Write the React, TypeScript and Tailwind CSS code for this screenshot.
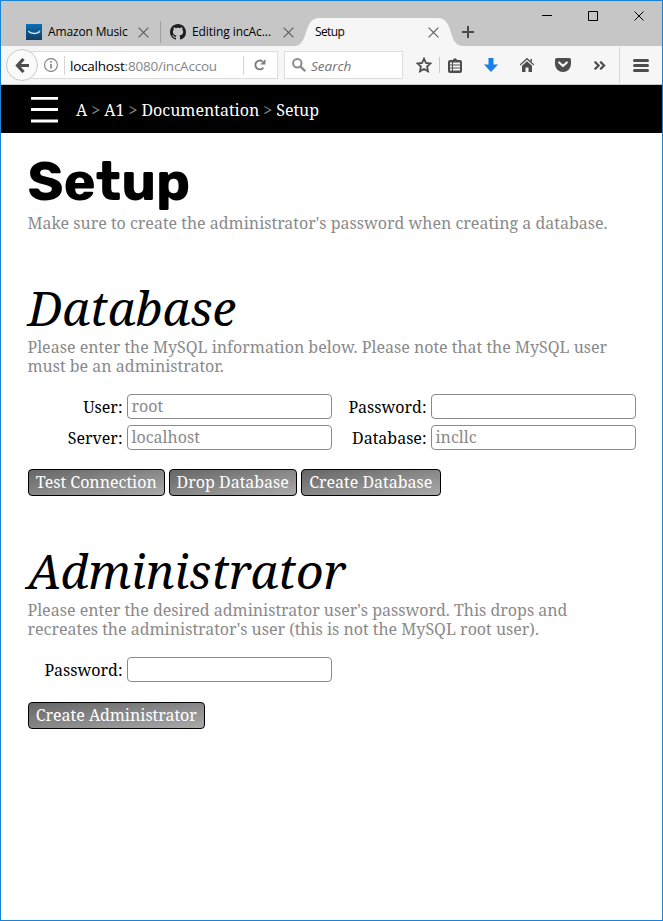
import type { ReactNode } from 'react';

const serif = "font-['Noto_Serif','Droid_Serif','DejaVu_Serif',serif]";
const sans = "font-['Segoe_UI','Open_Sans','Noto_Sans',sans-serif]";

function CloseIcon() {
  return (
    <svg className="h-[11px] w-[11px] shrink-0" viewBox="0 0 11 11" fill="none" stroke="#5c5c5c" strokeWidth="1.15">
      <path d="M.6.6l9.8 9.8M10.4.6L.6 10.4" />
    </svg>
  );
}

function TitleBar() {
  return (
    <div className={`flex h-[45px] bg-[#c6c6c6] text-[12px] text-black ${sans}`}>
      <div className="mt-[17px] flex h-[28px] w-[294px] shrink-0 items-center pl-[25px]">
        <svg className="h-4 w-4 shrink-0" viewBox="0 0 16 16">
          <defs>
            <linearGradient id="amz" x1="0" y1="0" x2="0" y2="1">
              <stop offset="0" stopColor="#0a6fb5" />
              <stop offset="1" stopColor="#123c63" />
            </linearGradient>
          </defs>
          <rect width="16" height="16" fill="url(#amz)" />
          <path d="M2.300 7.300c3 2.700 8 2.900 10.800.6" fill="none" stroke="#d9effc" strokeWidth="1.3" />
          <path d="M12 7.200l1.900-.1-.4 1.600" fill="none" stroke="#d9effc" strokeWidth=".8" />
        </svg>
        <span className="ml-[6px] w-[90px] whitespace-nowrap tracking-[-0.15px]">Amazon Music</span>
        <CloseIcon />
        <div className="ml-[11px] h-[22px] w-px bg-[#a0a0a0]" />
        <svg className="ml-[9px] h-4 w-4 shrink-0" viewBox="0 0 16 16" fill="#1b1f23">
          <path d="M8 0C3.58 0 0 3.58 0 8c0 3.54 2.29 6.53 5.47 7.59.4.07.55-.17.55-.38 0-.19-.01-.82-.01-1.49-2.01.37-2.53-.49-2.69-.94-.09-.23-.48-.94-.82-1.13-.28-.15-.68-.52-.01-.53.63-.01 1.08.58 1.23.82.72 1.21 1.87.87 2.33.66.07-.52.28-.87.51-1.07-1.78-.2-3.64-.89-3.64-3.95 0-.87.31-1.59.82-2.15-.08-.2-.36-1.02.08-2.12 0 0 .67-.21 2.2.82.64-.18 1.32-.27 2-.27s1.36.09 2 .27c1.53-1.04 2.2-.82 2.2-.82.44 1.1.16 1.92.08 2.12.51.56.82 1.27.82 2.15 0 3.07-1.87 3.75-3.65 3.95.29.25.54.73.54 1.48 0 1.07-.01 1.93-.01 2.2 0 .21.15.46.55.38A8.01 8.01 0 0016 8c0-4.42-3.58-8-8-8z" />
        </svg>
        <span className="ml-[6px] w-[91px] whitespace-nowrap tracking-[-0.08px]">Editing incAc...</span>
        <CloseIcon />
      </div>
      <div className="relative mt-[17px] h-[28px] w-[167px] shrink-0">
        <svg className="absolute inset-0 h-[28px] w-[167px]" viewBox="0 0 167 28">
          <path d="M0 28C14 27 8 0 24 0H143C159 0 153 27 167 28z" fill="#f6f6f6" />
        </svg>
        <div className="relative flex h-full items-center pl-5">
          <span className="w-[113px] tracking-[-0.6px]">Setup</span>
          <CloseIcon />
        </div>
      </div>
      <svg className="mt-[25px] h-[12px] w-[12px] shrink-0" viewBox="0 0 12 12" stroke="#4a4a4a" strokeWidth="2">
        <path d="M6 0v12M0 6h12" />
      </svg>
      <svg className="ml-[68px] mt-[10px] h-[11px] w-[102px] shrink-0" viewBox="0 0 102 11" fill="none" stroke="#000">
        <path d="M0 4.5h10M46.5.5h9v9h-9zM92.5.5l9 9M101.500.500l-9 9" />
      </svg>
    </div>
  );
}

function Toolbar() {
  return (
    <div className={`flex h-[39px] items-center border-b border-[#c8c8c6] bg-[#f6f6f6] ${sans}`}>
      <div className="z-10 ml-[5px] flex h-8 w-8 shrink-0 items-center justify-center rounded-full border border-[#c9c9c9] bg-[#fafafa]">
        <svg className="h-[15px] w-[15px]" viewBox="0 0 15 15" fill="none" stroke="#4d4d4d" strokeWidth="3.2">
          <path d="M8.500 1L2.500 7.500l6 6.500M2.500 7.500H14" />
        </svg>
      </div>
      <div className="-ml-4 flex h-[28px] w-[256px] shrink-0 items-center border border-[#dedede] bg-white pl-[21px]">
        <svg className="h-[14px] w-[14px] shrink-0" viewBox="0 0 14 14" fill="none" stroke="#808080">
          <circle cx="7" cy="7" r="6.4" strokeWidth="1.1" />
          <path d="M7 6v4.500M7 3v1.700" strokeWidth="1.6" />
        </svg>
        <div className="ml-[6px] h-[19px] w-px bg-[#d5d5d5]" />
        <span className="ml-[5px] mt-[3px] w-[173px] whitespace-nowrap text-[13.5px] tracking-[-0.22px] text-[#858585]"><span className="text-black">localhost</span>:8080/incAccou</span>
        <div className="h-[19px] w-px bg-[#d5d5d5]" />
        <svg className="ml-[10px] h-[12px] w-[12px] shrink-0" viewBox="0 0 12 12" fill="none" stroke="#808080" strokeWidth="1.9">
          <path d="M8.600 2.600A4.400 4.400 0 1 0 9.300 8.600" />
          <path d="M11.500 0v5.400H6.200z" fill="#808080" stroke="none" />
        </svg>
      </div>
      <div className="ml-[6px] flex h-[28px] w-[119px] shrink-0 items-center border border-[#dedede] bg-white pl-[7px]">
        <svg className="h-[14px] w-[14px]" viewBox="0 0 14 14" fill="none" stroke="#8b8b8b">
          <circle cx="5.3" cy="5.3" r="4.2" strokeWidth="2" />
          <path d="M8.500 8.500l4.700 4.700" strokeWidth="2.4" />
        </svg>
        <span className="ml-[5px] mt-[2px] text-[13.5px] italic text-[#737373]">Search</span>
      </div>
      <svg className="ml-[13px] h-4 w-4 shrink-0" viewBox="0 0 16 16" fill="none" stroke="#4d4d4d" strokeWidth="1.8">
        <path d="M8 1.700l1.900 4.300 4.600.500-3.400 3.100.9 4.700L8 12l-4 2.300.9-4.700L1.500 6.500l4.600-.5z" />
      </svg>
      <div className="ml-[7px] h-4 w-px shrink-0 bg-[#c8c8c8]" />
      <svg className="ml-[8px] h-[15px] w-[14px] shrink-0" viewBox="0 0 14 15">
        <path d="M2 2h2.500L7 0l2.500 2H12q2 0 2 2v9q0 2-2 2H2q-2 0-2-2V4q0-2 2-2z" fill="#4d4d4d" />
        <path d="M2 5.500h2M5 5.500h7M2 8.500h2M5 8.500h7M2 11.500h2M5 11.500h7" stroke="#f6f6f6" strokeWidth="2" />
      </svg>
      <svg className="ml-[22px] h-[14px] w-[14px] shrink-0" viewBox="0 0 14 14" fill="#177fe8">
        <path d="M4.500 0h5v6.500H14L7 14 0 6.500h4.500z" />
      </svg>
      <svg className="ml-[22px] h-[14px] w-[14px] shrink-0" viewBox="0 0 14 14" fill="#4d4d4d">
        <path d="M0 7l7-6.300L14 7" fill="none" stroke="#4d4d4d" strokeWidth="1.3" />
        <path d="M2 7.700l5-4.500 5 4.500V14H8.500v-4.500h-3V14H2zM10.500 1H12v3l-1.500-1.300z" />
      </svg>
      <svg className="ml-[21px] h-[14px] w-4 shrink-0" viewBox="0 0 16 14">
        <path d="M2 0h12q2 0 2 2v4a8 8 0 0 1-16 0V2q0-2 2-2z" fill="#4d4d4d" />
        <path d="M4.200 4.500L8 8l3.800-3.500" fill="none" stroke="#f6f6f6" strokeWidth="2.2" strokeLinecap="round" strokeLinejoin="round" />
      </svg>
      <svg className="ml-[23px] h-[9px] w-[12px] shrink-0" viewBox="0 0 12 9" fill="none" stroke="#4d4d4d" strokeWidth="2.2">
        <path d="M.7.600L4.600 4.500.7 8.400M6.200.600l3.900 3.900-3.900 3.900" />
      </svg>
      <div className="ml-[13px] h-[36px] w-px shrink-0 bg-[#d9d9d9]" />
      <svg className="ml-[13px] h-[13px] w-4 shrink-0" viewBox="0 0 16 13" stroke="#4d4d4d" strokeWidth="3" strokeLinecap="round">
        <path d="M1.500 1.500h13M1.500 6.500h13M1.500 11.500h13" />
      </svg>
    </div>
  );
}

function Crumbs() {
  const sep = <span className="text-[#8a8a8a]">&gt;</span>;
  return (
    <nav className="flex h-12 items-center bg-black pl-[29.5px] text-[16px] text-white">
      <svg className="mt-[2px] h-[26px] w-[27.500px] shrink-0" viewBox="0 0 27.5 26" stroke="#fff" strokeWidth="2.8">
        <path d="M0 1.300h28M0 12.500h28M0 24h28" />
      </svg>
      <div className="ml-[18px] mt-[2px] flex gap-[4px] whitespace-nowrap">
        <span>A</span>{sep}<span>A1</span>{sep}<span>Documentation</span>{sep}<span>Setup</span>
      </div>
    </nav>
  );
}

function Field({ label, value = '' }: { label: string; value?: string }) {
  return (
    <div className="flex h-[25px]">
      <label className="mr-[4.5px] w-[94.5px] pt-[3px] text-right leading-[21px]">{label}</label>
      <div className="h-[25px] w-[205px] rounded-[4px] border border-[#8a8a8a] bg-white pl-[3.5px] leading-[22px] text-[#8a8a8a]">{value}</div>
    </div>
  );
}

function Button({ children, width }: { children: ReactNode; width: string }) {
  return (
    <button className={`h-[27px] whitespace-nowrap rounded-[4px] border border-black bg-linear-to-br from-[#666] to-[#aaa] pb-px pr-[0.5px] text-center leading-[24px] text-white ${width}`}>
      {children}
    </button>
  );
}

export default function App() {
  return (
    <div className={`h-[921px] w-[663px] overflow-hidden border border-[#1883d7] bg-white text-[16px] text-black ${serif}`}>
      <TitleBar />
      <Toolbar />
      <Crumbs />
      <main className="pl-[27px]">
        <h1 className="-ml-[0.5px] mt-[19px] h-[62px] font-['Rubik','Inter',sans-serif] text-[54.4px] font-bold leading-[59px]">Setup</h1>
        <p className="-ml-[0.5px] whitespace-nowrap leading-[19px] text-[#8a8a8a]">Make sure to create the administrator's password when creating a database.</p>

        <h2 className="-ml-[0.5px] mt-[46px] h-[59px] text-[48px] italic leading-[57px]">Database</h2>
        <p className="-ml-[0.5px] whitespace-nowrap leading-[19px] text-[#8a8a8a]">Please enter the MySQL information below. Please note that the MySQL user<br />must be an administrator.</p>
        <div className="mt-[18px] grid grid-cols-[304px_304px] gap-y-[6px]">
          <Field label="User:" value="root" />
          <Field label="Password:" />
          <Field label="Server:" value="localhost" />
          <Field label="Database:" value="incllc" />
        </div>
        <div className="mt-[19px] flex gap-1">
          <Button width="w-[137px]">Test Connection</Button>
          <Button width="w-[128px]">Drop Database</Button>
          <Button width="w-[140px]">Create Database</Button>
        </div>

        <h2 className="-ml-[0.5px] mt-[46px] h-[59px] text-[48px] italic leading-[57px]">Administrator</h2>
        <p className="-ml-[0.5px] whitespace-nowrap leading-[19px] text-[#8a8a8a]">Please enter the desired administrator user's password. This drops and<br />recreates the administrator's user (this is not the MySQL root user).</p>
        <div className="mt-[18px]">
          <Field label="Password:" />
        </div>
        <div className="mt-[20px] flex">
          <Button width="w-[177px]">Create Administrator</Button>
        </div>
      </main>
    </div>
  );
}
